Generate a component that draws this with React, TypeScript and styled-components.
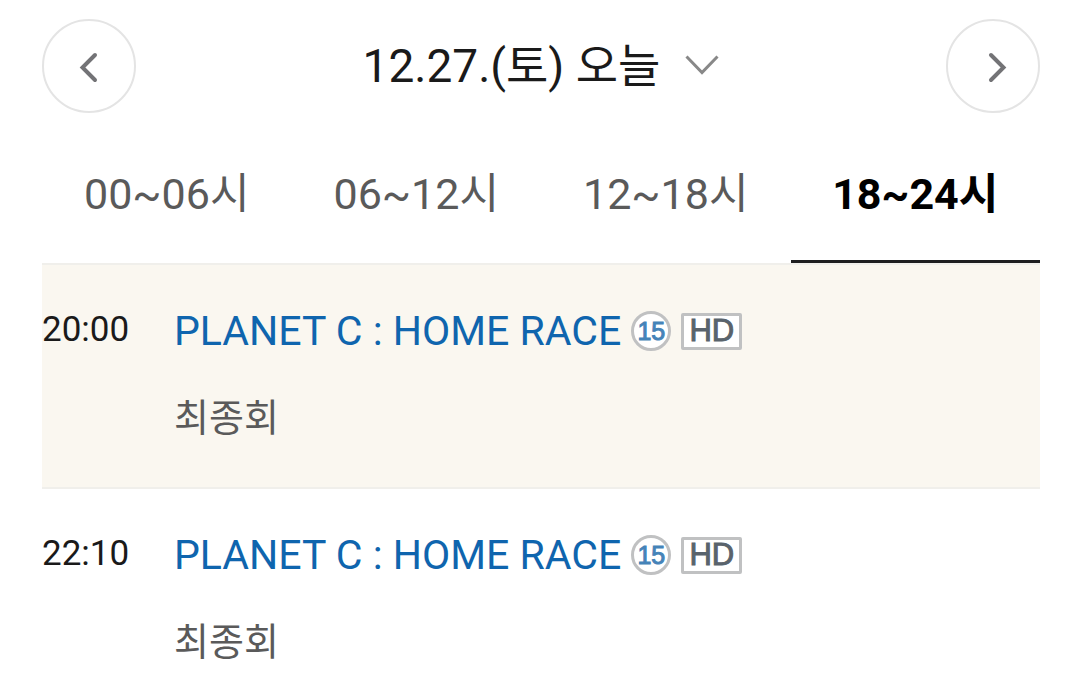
import React, { useState } from "react";
import styled, { createGlobalStyle } from "styled-components";

const GlobalStyle = createGlobalStyle`
  * { box-sizing: border-box; }
  body {
    margin: 0;
    background: #fff;
    color: #1a1a1a;
    font-family: Roboto, "Noto Sans CJK KR", sans-serif;
  }
`;

const Page = styled.main`
  padding: 19px 40px 0 42px;
`;

const DateBar = styled.header`
  display: flex;
  align-items: center;
  justify-content: space-between;
`;

const RoundButton = styled.button`
  display: flex;
  align-items: center;
  justify-content: center;
  width: 94px;
  height: 94px;
  padding: 0;
  border: 2px solid #e4e4e4;
  border-radius: 50%;
  background: #fff;
`;

const DateButton = styled.button`
  display: flex;
  align-items: center;
  gap: 25px;
  padding: 0;
  border: 0;
  background: none;
  color: #1a1a1a;
  font: inherit;
  font-size: 46px;
  line-height: 64px;
`;

const Tabs = styled.nav`
  display: grid;
  grid-template-columns: repeat(4, 1fr);
  margin-top: 30px;
`;

const Tab = styled.button<{ $active: boolean }>`
  height: 120px;
  padding: 0 0 24px;
  border: 0;
  border-bottom: 3px solid ${(p) => (p.$active ? "#1e1e20" : "transparent")};
  background: none;
  color: ${(p) => (p.$active ? "#000" : "#5a5a5a")};
  font: inherit;
  font-size: 43px;
  font-weight: ${(p) => (p.$active ? 700 : 400)};
  white-space: nowrap;
`;

const Schedule = styled.ul`
  margin: 0;
  padding: 0;
  list-style: none;
`;

const Program = styled.li<{ $onAir: boolean }>`
  display: grid;
  grid-template-columns: 132px 1fr;
  padding: 38px 0 42px;
  border-top: 2px solid #f0efeb;
  background: ${(p) => (p.$onAir ? "#faf7f0" : "#fff")};
`;

const Time = styled.time`
  font-size: 35px;
  line-height: 54px;
`;

const TitleRow = styled.div`
  display: flex;
  align-items: center;
  height: 56px;
`;

const Title = styled.a`
  margin-right: 10px;
  color: #0f65ae;
  font-size: 41px;
  line-height: 56px;
  text-decoration: none;
`;

const Badge = styled.span`
  display: flex;
  align-items: center;
  justify-content: center;
  border: 3px solid #c0c1c2;
  background: #fff;
  font-family: "Liberation Sans", sans-serif;
  -webkit-text-stroke: 1px currentColor;
`;

const AgeBadge = styled(Badge)`
  width: 40px;
  height: 40px;
  margin-right: 10px;
  border-radius: 50%;
  color: #4583b8;
  font-size: 25px;
`;

const HdBadge = styled(Badge)`
  width: 61px;
  height: 37px;
  border-radius: 2px;
  color: #59636c;
  font-size: 31px;
  line-height: 32px;
`;

const Episode = styled.p`
  margin: 32px 0 0;
  color: #5a5a5a;
  font-size: 38px;
  line-height: 54px;
`;

const ranges = ["00~06시", "06~12시", "12~18시", "18~24시"];
const programs = [
  { time: "20:00", title: "PLANET C : HOME RACE", episode: "최종회", onAir: true },
  { time: "22:10", title: "PLANET C : HOME RACE", episode: "최종회", onAir: false },
];

export default function App() {
  const [selected, setSelected] = useState(3);
  return (
    <Page>
      <GlobalStyle />
      <DateBar>
        <RoundButton aria-label="이전 날짜">
          <svg width="32" height="36" viewBox="0 0 32 36" fill="none" stroke="#737376" strokeWidth="4" strokeLinecap="round">
            <path d="M22 7 9.500 19.500 22 32" />
          </svg>
        </RoundButton>
        <DateButton>
          12.27.(토) 오늘
          <svg width="34" height="22" viewBox="0 0 34 22" fill="none" stroke="#888" strokeWidth="3">
            <path d="M1.500 1.500 17 17.500 32.500 1.500" />
          </svg>
        </DateButton>
        <RoundButton aria-label="다음 날짜">
          <svg width="32" height="36" viewBox="0 0 32 36" fill="none" stroke="#737376" strokeWidth="4" strokeLinecap="round">
            <path d="M14 7 26.500 19.500 14 32" />
          </svg>
        </RoundButton>
      </DateBar>
      <Tabs>
        {ranges.map((range, i) => (
          <Tab key={range} $active={i === selected} aria-pressed={i === selected} onClick={() => setSelected(i)}>
            {range}
          </Tab>
        ))}
      </Tabs>
      <Schedule>
        {programs.map((p) => (
          <Program key={p.time} $onAir={p.onAir}>
            <Time>{p.time}</Time>
            <div>
              <TitleRow>
                <Title href="#">{p.title}</Title>
                <AgeBadge>15</AgeBadge>
                <HdBadge>HD</HdBadge>
              </TitleRow>
              <Episode>{p.episode}</Episode>
            </div>
          </Program>
        ))}
      </Schedule>
    </Page>
  );
}
